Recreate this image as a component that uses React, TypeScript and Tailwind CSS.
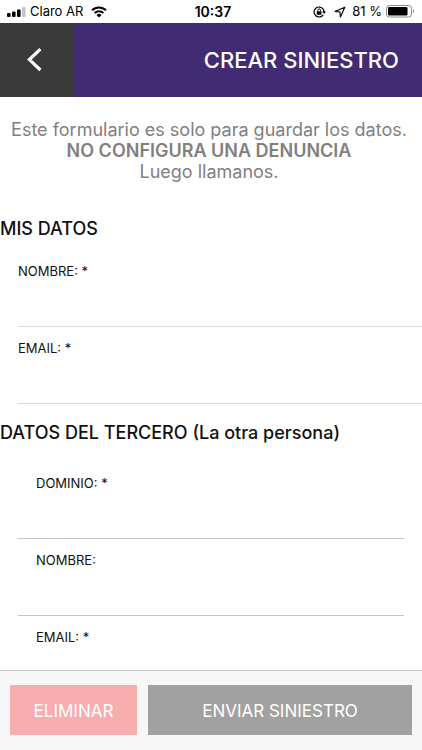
import { useState } from "react";

interface Field {
  id: string;
  label: string;
  type: string;
}

const ownFields: Field[] = [
  { id: "own-name", label: "NOMBRE: *", type: "text" },
  { id: "own-email", label: "EMAIL: *", type: "email" },
];

const thirdPartyFields: Field[] = [
  { id: "third-plate", label: "DOMINIO: *", type: "text" },
  { id: "third-name", label: "NOMBRE:", type: "text" },
  { id: "third-email", label: "EMAIL: *", type: "email" },
];

const StatusBar = () => (
  <div className="grid h-[23px] shrink-0 grid-cols-[1fr_auto_1fr] items-center bg-white px-[7px] text-[13px] text-black">
    <div className="flex items-center">
      <svg width="19" height="10" viewBox="0 0 19 10" aria-hidden="true">
        <rect x="0" y="6" width="3.6" height="4" rx="1" />
        <rect x="5" y="4.4" width="3.6" height="5.6" rx="1" />
        <rect x="10" y="2.4" width="3.6" height="7.6" rx="1" />
        <rect x="15" y="0" width="3.6" height="10" rx="1" fill="#c4c4c4" />
      </svg>
      <span className="ml-1">Claro AR</span>
      <svg className="ml-2" width="16" height="12" viewBox="0 0 16 12" aria-hidden="true">
        <path d="M1 4.3a10 10 0 0 1 14 0" fill="none" stroke="#000" strokeWidth="2" />
        <path d="M3.6 7a6.3 6.3 0 0 1 8.8 0" fill="none" stroke="#000" strokeWidth="1.9" />
        <path d="M8 11.6 5.5 9a3.6 3.6 0 0 1 5 0Z" />
      </svg>
    </div>
    <span className="pl-1 text-[14px] font-semibold">10:37</span>
    <div className="flex items-center justify-end">
      <svg width="13" height="12" viewBox="0 0 13 12" aria-hidden="true">
        <path
          d="M10.2 3.2A5 5 0 1 0 10.2 8.8M10.2 3.2a5 5 0 0 1 .9 2.8"
          fill="none"
          stroke="#000"
          strokeWidth="1.2"
        />
        <path d="M9.1 5.5H13L11.1 8Z" />
        <rect x="3.7" y="5.3" width="4.8" height="3.5" rx="0.5" />
        <path d="M4.7 5.5V4.3a1.4 1.4 0 0 1 2.8 0v1.2" fill="none" stroke="#000" strokeWidth="0.9" />
      </svg>
      <svg className="ml-2" width="12" height="12" viewBox="0 0 12 12" aria-hidden="true">
        <path
          d="M10.8 1.2 1 5.4l5 .6.4 5Z"
          fill="none"
          stroke="#000"
          strokeWidth="1.1"
          strokeLinejoin="round"
        />
      </svg>
      <span className="ml-[6px] whitespace-pre">81 %</span>
      <svg className="ml-1" width="29" height="13" viewBox="0 0 29 13" aria-hidden="true">
        <rect x="0.5" y="0.5" width="25" height="11.5" rx="2.8" fill="none" stroke="#8a8a8a" />
        <rect x="2" y="2" width="19.5" height="8.5" rx="1.2" />
        <path d="M27 4.2c1.6.7 1.6 3.4 0 4.1Z" fill="#8a8a8a" />
      </svg>
    </div>
  </div>
);

const App: React.FC = () => {
  const [values, setValues] = useState<Record<string, string>>({});

  const update = (id: string, value: string) => {
    setValues((prev) => ({ ...prev, [id]: value }));
  };

  return (
    <div className="flex h-screen flex-col bg-white font-['Inter','Liberation_Sans',sans-serif] text-[#111111]">
      <StatusBar />

      <header className="flex h-[74px] shrink-0 items-center justify-between bg-[#412b72] pr-[23px]">
        <button
          type="button"
          aria-label="Volver"
          className="flex h-full w-[74px] items-center bg-[#3a3a3a] pl-[27px]"
        >
          <svg width="15" height="24" viewBox="0 0 15 24" aria-hidden="true">
            <path d="M13.4 1.2 2.4 11.6l11 10.4" fill="none" stroke="#fff" strokeWidth="3.2" />
          </svg>
        </button>
        <h1 className="text-[22px] font-medium text-white">CREAR SINIESTRO</h1>
      </header>

      <main className="min-h-0 flex-1 overflow-y-auto [scrollbar-width:none]">
        <p className="pt-[22px] pr-1 text-center text-[18px] leading-[21px] text-[#808080]">
          Este formulario es solo para guardar los datos.
          <strong className="block font-semibold">NO CONFIGURA UNA DENUNCIA</strong>
          Luego llamanos.
        </p>

        <section className="pt-[35px]">
          <h2 className="mb-[9px] text-[18px] leading-6 font-medium">MIS DATOS</h2>
          {ownFields.map((field) => (
            <div key={field.id} className="ml-[18px] flex flex-col pt-3">
              <label htmlFor={field.id} className="text-[13px] leading-[18px]">
                {field.label}
              </label>
              <input
                id={field.id}
                type={field.type}
                value={values[field.id] ?? ""}
                onChange={(e) => update(field.id, e.target.value)}
                className="h-[47px] w-full border-b border-[#d8d8d8] outline-none"
              />
            </div>
          ))}
        </section>

        <section className="pt-[17px]">
          <h2 className="mb-[17px] text-[18px] leading-6 font-medium">
            DATOS DEL TERCERO (La otra persona)
          </h2>
          {thirdPartyFields.map((field) => (
            <div key={field.id} className="mx-[18px] flex flex-col pt-3">
              <label htmlFor={field.id} className="pl-[18px] text-[13px] leading-[18px]">
                {field.label}
              </label>
              <input
                id={field.id}
                type={field.type}
                value={values[field.id] ?? ""}
                onChange={(e) => update(field.id, e.target.value)}
                className="h-[47px] w-full border-b border-[#c4c4c4] px-[18px] outline-none"
              />
            </div>
          ))}
        </section>
      </main>

      <footer className="flex shrink-0 gap-[11px] border-t border-[#c8c8c8] bg-[#f7f7f7] px-[10px] pt-[14px] pb-[15px] text-[17px] text-white">
        <button type="button" className="h-[50px] w-[127px] bg-[#f8adaf] pt-[3px]">
          ELIMINAR
        </button>
        <button type="button" className="h-[50px] flex-1 bg-[#a1a1a1] pt-[3px]">
          ENVIAR SINIESTRO
        </button>
      </footer>
    </div>
  );
};

export default App;
